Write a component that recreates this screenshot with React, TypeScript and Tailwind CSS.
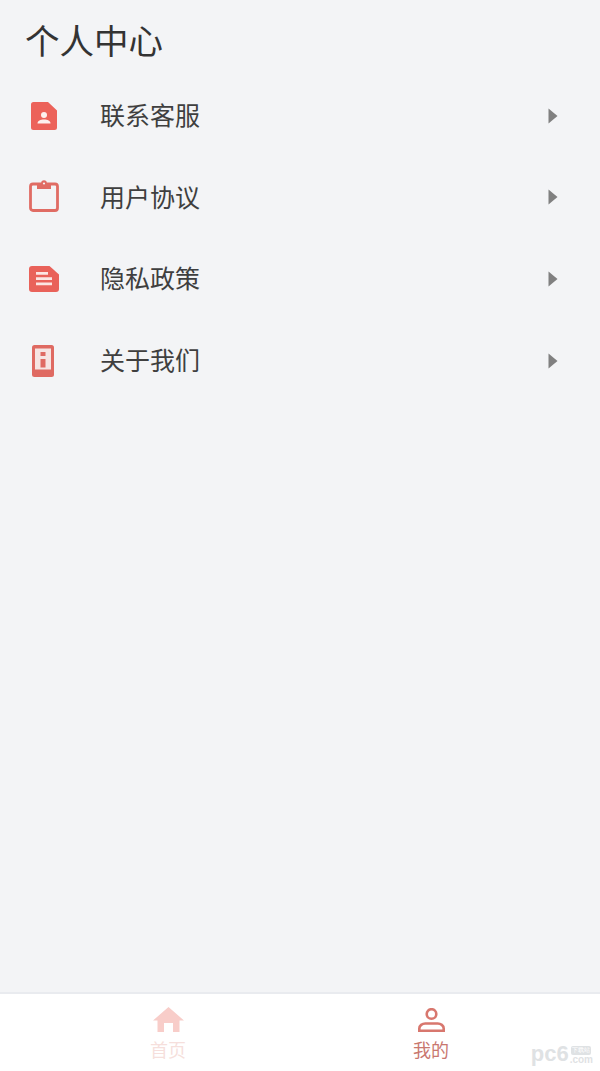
import React from 'react';

function ContactIcon() {
  return (
    <svg width="26" height="28" viewBox="0 0 26 28">
      <path d="M2.500 0H17l9 8.500V25.500a2.500 2.500 0 0 1-2.500 2.500h-21A2.500 2.500 0 0 1 0 25.500v-23A2.500 2.500 0 0 1 2.500 0z" fill="#ec625a" />
      <circle cx="13" cy="13" r="3" fill="#fdf0ee" />
      <path d="M6.500 21.500c0-2.800 3-4 6.500-4s6.500 1.200 6.500 4z" fill="#fdf0ee" />
    </svg>
  );
}

function ClipboardIcon() {
  return (
    <svg className="-mt-[3px]" width="30" height="32" viewBox="0 0 30 32">
      <rect x="1.500" y="4" width="27" height="26.500" rx="2.500" fill="none" stroke="#e06c64" strokeWidth="2.800" />
      <path d="M8 3h4.200a2.800 2.800 0 0 1 5.600 0H22v6H8z" fill="#e06c64" />
      <circle cx="15" cy="3.500" r="1.100" fill="#f3f4f6" />
    </svg>
  );
}

function DocIcon() {
  return (
    <svg width="30" height="26" viewBox="0 0 30 26">
      <path d="M3 0h17.500L30 8.500V23a3 3 0 0 1-3 3H3a3 3 0 0 1-3-3V3a3 3 0 0 1 3-3z" fill="#e9625a" />
      <path d="M7 6h12v2.800H7zM7 11.200h16V14H7zM7 16.400h16v2.800H7z" fill="#fbe6e3" />
    </svg>
  );
}

function InfoIcon() {
  return (
    <svg className="-ml-[1px]" width="22" height="32" viewBox="0 0 22 32">
      <rect x="0" y="0" width="22" height="32" rx="2.500" fill="#df6a62" />
      <rect x="3" y="3.500" width="16" height="21" fill="#f6e4e2" />
      <path d="M8.500 7h5v4h-5zM8.500 14h5v8.500h-5z" fill="#df6a62" />
    </svg>
  );
}

const rows = [
  { label: '联系客服', icon: <ContactIcon /> },
  { label: '用户协议', icon: <ClipboardIcon /> },
  { label: '隐私政策', icon: <DocIcon /> },
  { label: '关于我们', icon: <InfoIcon /> },
];

export default function App() {
  return (
    <div className="flex h-[1071px] w-[600px] flex-col bg-[#f3f4f6] font-['Noto_Sans_CJK_SC',sans-serif]">
      <h1 className="pl-[25px] pt-[19px] text-[34.500px] leading-[40px] font-normal text-[#333333]">个人中心</h1>

      <div className="mt-[16px] flex flex-1 flex-col">
        {rows.map((row) => (
          <div key={row.label} className="flex h-[81.600px] items-center pl-[28px] pr-[42px]">
            <div className="flex w-[31px] justify-center">{row.icon}</div>
            <span className="mb-[2px] ml-[41px] text-[25px] text-[#3f3f3f]">{row.label}</span>
            <svg className="ml-auto" width="10" height="16" viewBox="0 0 10 16">
              <path d="M0.500 0.500L9.500 8L0.500 15.500z" fill="#808080" />
            </svg>
          </div>
        ))}
      </div>

      <div className="relative flex h-[79px] border-t-2 border-[#e9ebef] bg-white">
        <div className="flex w-[336px] flex-col items-center pt-[13px]">
          <svg width="31" height="25" viewBox="0 0 31 25">
            <path d="M15.500 0L31 13.500h-4.500V25H20V16h-9v9H4.500V13.500H0z" fill="#f8cdc9" />
          </svg>
          <span className="mt-[5px] text-[18px] leading-[24px] text-[#f6dfdc]">首页</span>
        </div>
        <div className="flex w-[190px] flex-col items-center pt-[14px]">
          <svg width="27" height="24" viewBox="0 0 27 24">
            <circle cx="13.500" cy="6" r="4.800" fill="none" stroke="#d8776e" strokeWidth="2.600" />
            <path d="M1.300 22.700v-2.200c0-3 3-5 6-5h12.400c3 0 6 2 6 5v2.200z" fill="none" stroke="#d8776e" strokeWidth="2.600" />
          </svg>
          <span className="mt-[5px] text-[18px] leading-[24px] text-[#c9776f]">我的</span>
        </div>
        <div className="absolute right-[7px] bottom-[6px] flex items-end gap-[1px] font-['Liberation_Sans',sans-serif] text-[#dfe2e4]">
          <span className="text-[22px] leading-[22px] font-bold">pc6</span>
          <span className="flex flex-col items-center text-[10px] leading-[10px]">
            <span className="rounded-[2px] bg-[#dfe2e4] px-[1px] text-[6px] leading-[9px] text-white">下载站</span>
            <span className="font-bold">.com</span>
          </span>
        </div>
      </div>
    </div>
  );
}
